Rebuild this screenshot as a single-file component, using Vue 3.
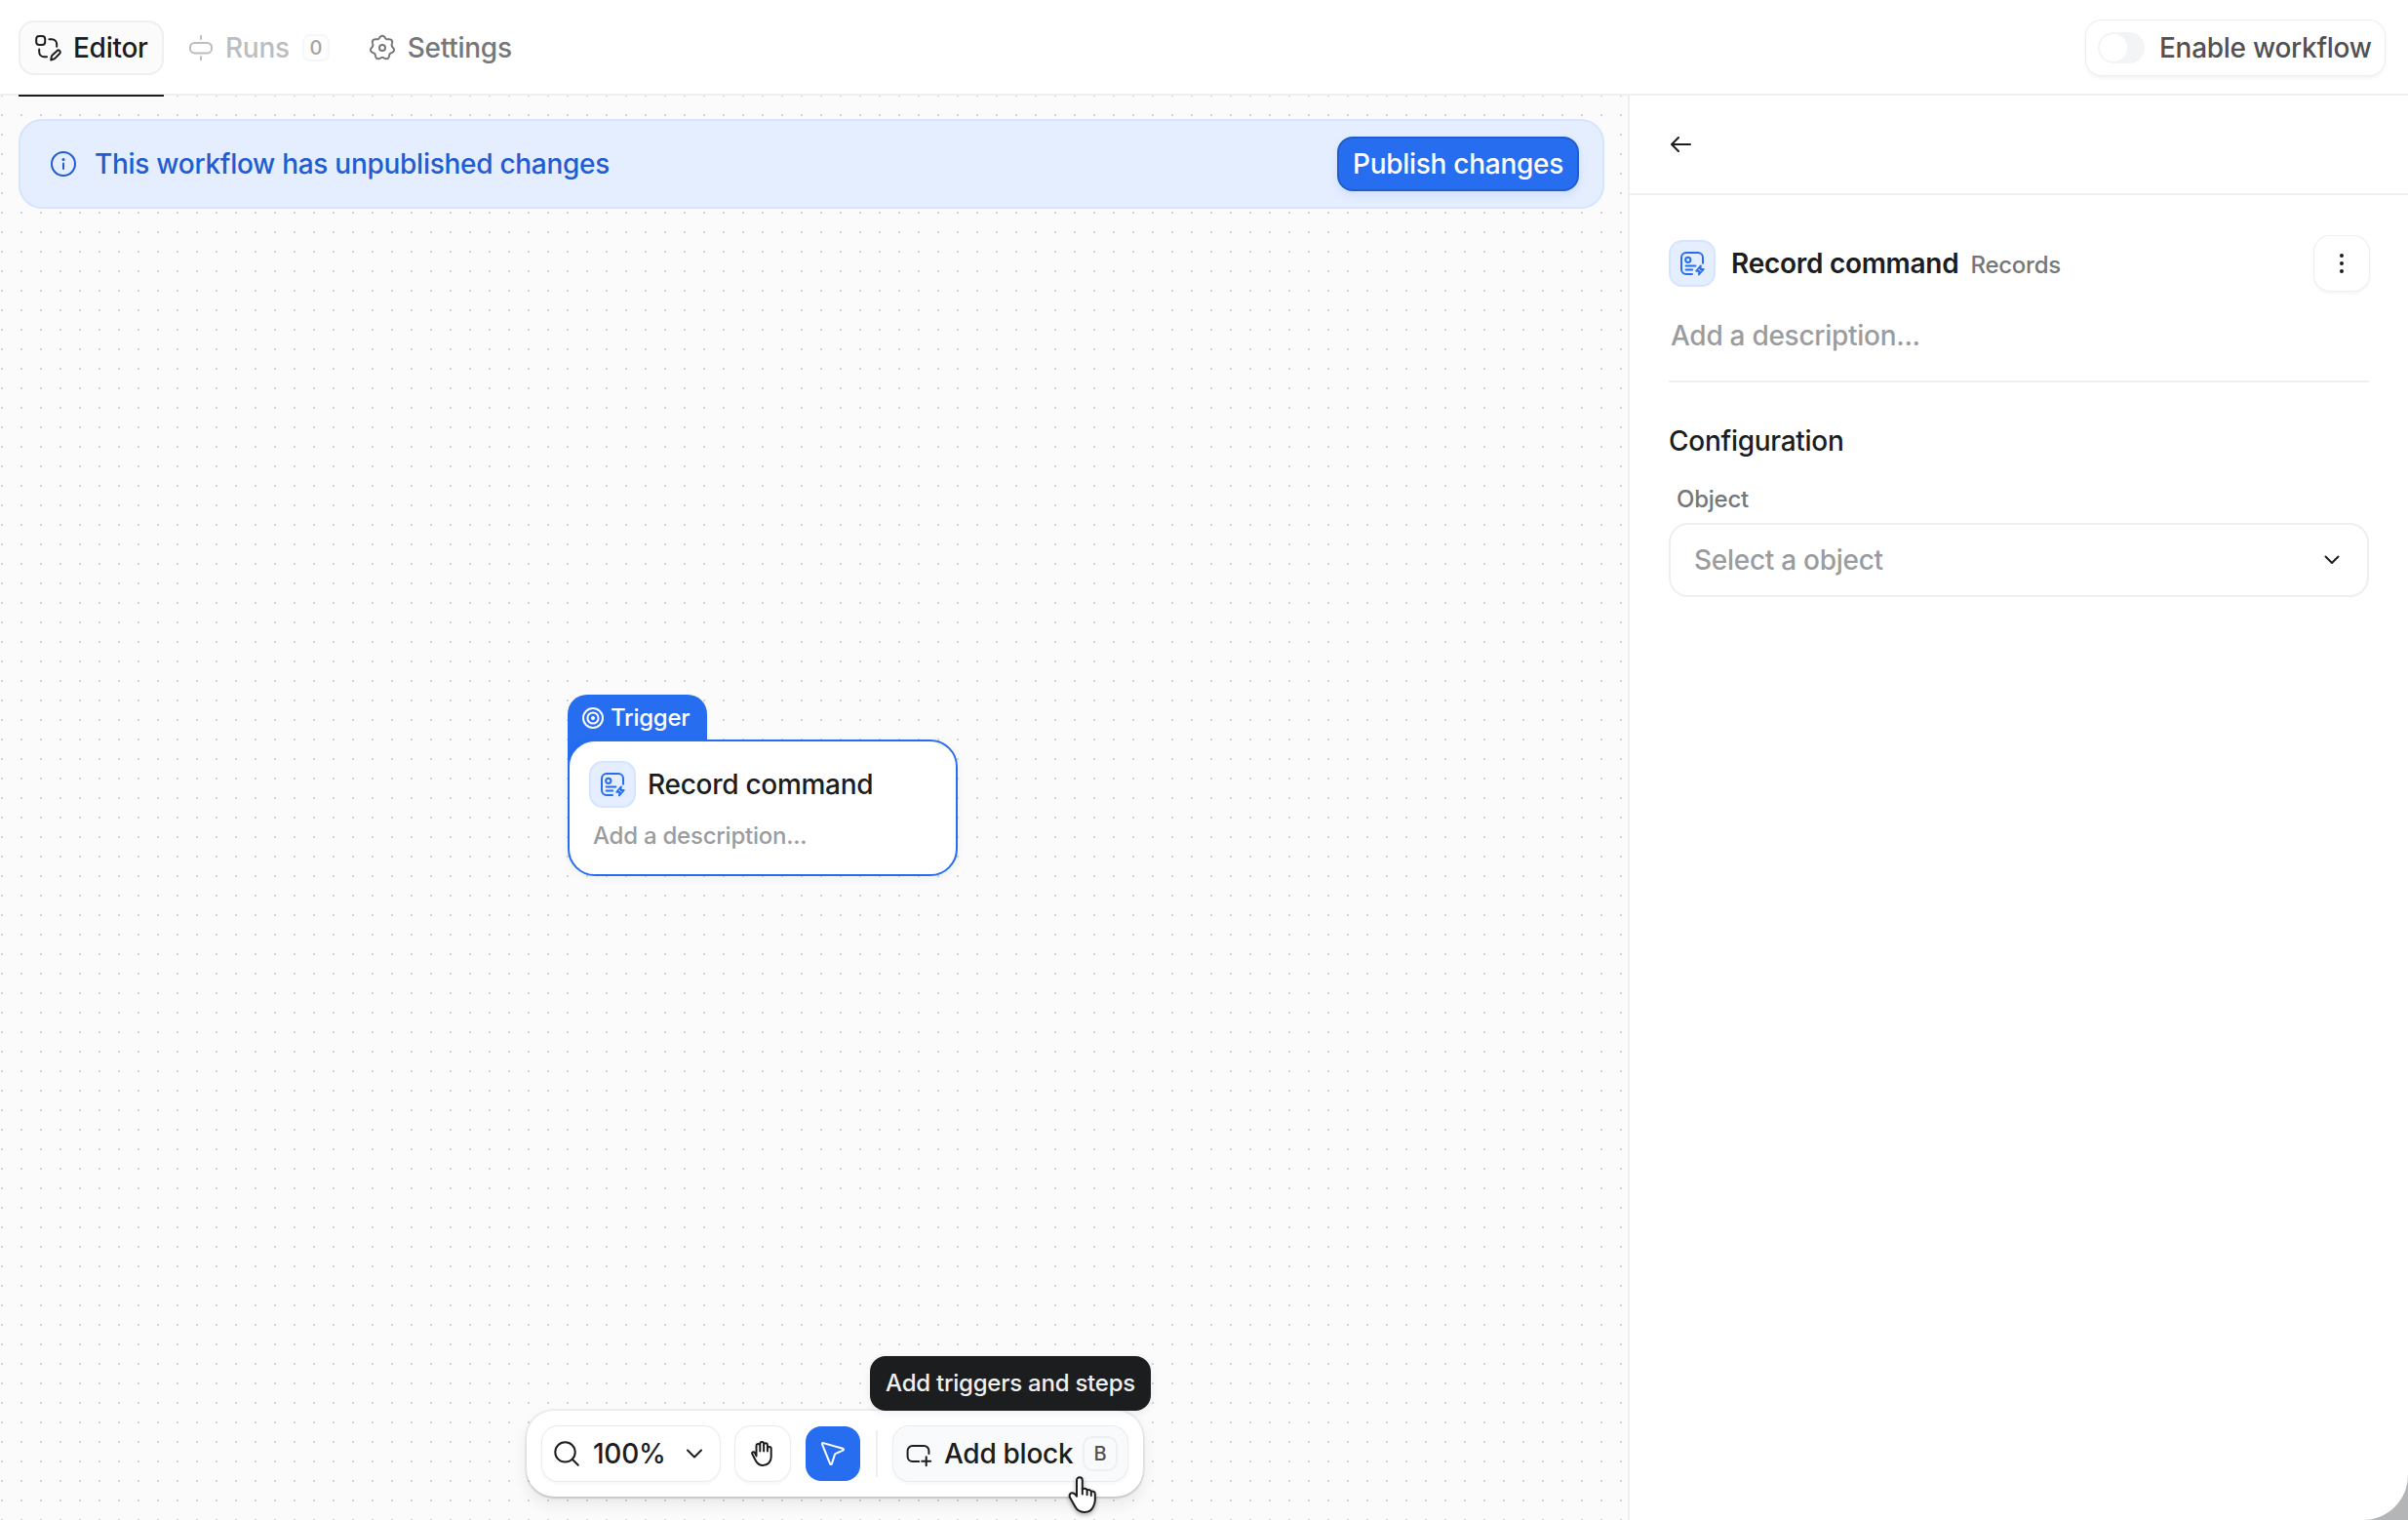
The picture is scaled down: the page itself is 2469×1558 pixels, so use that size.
<script setup>
    import { ref } from 'vue'

    const enabled = ref(false)
    const tool = ref('select')

    // seven-lobed outline of the settings cog
    const cogPath = (() => {
        const points = []
        for (let i = 0; i < 140; i++) {
            const a = (i / 140) * Math.PI * 2
            const r = 11.1 + 1.2 * Math.cos(a * 7)
            points.push(`${(14 + r * Math.sin(a)).toFixed(2)} ${(14 - r * Math.cos(a)).toFixed(2)}`)
        }
        return `M${points.join('L')}Z`
    })()
</script>

<template>
    <div class="app">
        <header class="topbar">
            <nav class="tabs">
                <button class="tab tab-active" type="button">
                    <svg class="icon" viewBox="0 0 28 28">
                        <rect x="1.2" y="2" width="9" height="9" rx="3" />
                        <path d="M14.4 5.2h2.8a5 5 0 0 1 5 5v2.6M4.2 15.6v2.6a5 5 0 0 0 5 5H12" />
                        <path d="M16.2 26.5l.6-3.4a3 3 0 0 1 .9-1.6l4.7-4.3a1.9 1.9 0 0 1 2.9 2.5l-4.7 4.9a3 3 0 0 1-1.5.9z" />
                    </svg>
                    <span>Editor</span>
                </button>
                <button class="tab tab-disabled" type="button">
                    <svg class="icon" viewBox="0 0 28 28">
                        <rect x="3" y="9" width="22" height="10.4" rx="4.5" />
                        <path d="M14 2v3M14 23.2v3" />
                    </svg>
                    <span>Runs</span>
                    <span class="count">0</span>
                </button>
                <button class="tab tab-settings" type="button">
                    <svg class="icon" viewBox="0 0 28 28">
                        <path :d="cogPath" />
                        <circle cx="14" cy="14" r="3" />
                    </svg>
                    <span>Settings</span>
                </button>
            </nav>
            <button class="enable" type="button" @click="enabled = !enabled">
                <span class="switch" :class="{ 'switch-on': enabled }"><span class="knob" /></span>
                <span>Enable workflow</span>
            </button>
        </header>

        <main class="body">
            <section class="canvas">
                <div class="banner">
                    <svg class="icon" viewBox="0 0 28 28">
                        <circle cx="14" cy="14" r="12" />
                        <path d="M14 13.6v5.4" />
                        <circle class="fill" cx="14" cy="9.4" r="1.5" />
                    </svg>
                    <span class="banner-text">This workflow has unpublished changes</span>
                    <button class="publish" type="button">Publish changes</button>
                </div>

                <div class="node">
                    <div class="node-tag">
                        <svg class="tag-icon" viewBox="0 0 24 24">
                            <circle cx="12" cy="12" r="10" />
                            <circle cx="12" cy="12" r="5.6" />
                            <circle class="fill" cx="12" cy="12" r="2" />
                        </svg>
                        <span>Trigger</span>
                    </div>
                    <div class="node-card">
                        <div class="node-head">
                            <span class="tile">
                                <svg class="icon" viewBox="0 0 28 28">
                                    <path d="M25 13.8V8a5 5 0 0 0-5-5H8a5 5 0 0 0-5 5v12a5 5 0 0 0 5 5h6" />
                                    <circle cx="9.8" cy="10.3" r="2.6" />
                                    <path d="M7.6 16.4h9.8M7.6 20.5h6.6" />
                                    <path class="thin" d="M22.9 16.3l-4.7 5.5h3.3l-.6 3.7 4.9-5.5h-3.3z" />
                                </svg>
                            </span>
                            <span>Record command</span>
                        </div>
                        <div class="node-desc">Add a description...</div>
                    </div>
                </div>

                <div class="toolbar">
                    <button class="tool zoom" type="button">
                        <svg class="icon" viewBox="0 0 28 28">
                            <circle cx="12.5" cy="12.4" r="10.2" />
                            <path d="M19.8 19.7l6 6" />
                        </svg>
                        <span class="zoom-value">100%</span>
                        <svg class="chevron" viewBox="0 0 20 20"><path d="M3 6.5l7 7 7-7" /></svg>
                    </button>
                    <button class="tool" :class="{ 'tool-active': tool === 'hand' }" type="button" @click="tool = 'hand'">
                        <svg class="icon" viewBox="0 0 28 28">
                            <path d="M7.5 16.6V6a1.9 1.9 0 0 1 3.8 0v5.4M11.3 6V3.9a1.9 1.9 0 0 1 3.8 0v7.5M15.1 5.2a1.9 1.9 0 0 1 3.8 0v6.4M18.9 9a1.9 1.9 0 0 1 3.8 0v8.2c0 5.2-3.4 8.8-8.4 8.8-3.6 0-5.8-1.6-7.4-4.7l-3.5-6.8c-.9-1.9 1.5-3 2.6-1.3l1.5 2.8" />
                        </svg>
                    </button>
                    <button class="tool" :class="{ 'tool-active': tool === 'select' }" type="button" @click="tool = 'select'">
                        <svg class="icon" viewBox="0 0 28 28">
                            <path d="M4.2 3.1l20 5.7c1 .3 1 1.5.1 1.9l-7.3 3.1a2 2 0 0 0-1 1l-3.1 9.6c-.3.9-1.5.9-1.8 0L3 4.3c-.3-.8.4-1.4 1.2-1.2z" />
                        </svg>
                    </button>
                    <span class="divider" />
                    <button class="tool add" type="button">
                        <svg class="icon" viewBox="0 0 28 28">
                            <path d="M24.4 14v-3a5 5 0 0 0-5-5H7.6a5 5 0 0 0-5 5v6a5 5 0 0 0 5 5h6.6" />
                            <path d="M21.7 17.3v9M17.2 21.8h9" />
                        </svg>
                        <span>Add block</span>
                        <kbd class="key">B</kbd>
                    </button>
                </div>

                <div class="tooltip">Add triggers and steps</div>

                <svg class="pointer" viewBox="0 0 32 42">
                    <path d="M10 20V5.2a2.9 2.9 0 0 1 5.8 0v9.3c1.6-1.4 4.2-1 4.8.9 1.7-1 3.7-.3 4.2 1.4 1.8-.7 4 .3 4 2.6v6.3c0 3-.8 4.6-2 7-1.5 3.4-4.6 5.3-9 5.3-5.3 0-7.7-2.2-9.9-6.5L3 22.8c-1-2.3.2-4.3 2-4.5 2-.2 3.4.9 5 3.4z" />
                    <path d="M15.8 14v5.5M20.6 15.6v4.6M24.8 17v4" />
                </svg>
            </section>

            <aside class="panel">
                <div class="panel-top">
                    <svg class="icon" viewBox="0 0 28 28"><path d="M24 14H5.3M12 7l-7 7 7 7" /></svg>
                </div>
                <div class="panel-body">
                    <div class="panel-head">
                        <span class="tile">
                            <svg class="icon" viewBox="0 0 28 28">
                                <path d="M25 13.8V8a5 5 0 0 0-5-5H8a5 5 0 0 0-5 5v12a5 5 0 0 0 5 5h6" />
                                <circle cx="9.8" cy="10.3" r="2.6" />
                                <path d="M7.6 16.4h9.8M7.6 20.5h6.6" />
                                <path class="thin" d="M22.9 16.3l-4.7 5.5h3.3l-.6 3.7 4.9-5.5h-3.3z" />
                            </svg>
                        </span>
                        <span class="panel-title">Record command</span>
                        <span class="panel-kind">Records</span>
                        <button class="more" type="button">
                            <svg class="icon" viewBox="0 0 28 28">
                                <circle class="fill" cx="14" cy="6" r="2" />
                                <circle class="fill" cx="14" cy="14" r="2" />
                                <circle class="fill" cx="14" cy="22" r="2" />
                            </svg>
                        </button>
                    </div>
                    <div class="panel-desc">Add a description...</div>
                    <h2 class="section-title">Configuration</h2>
                    <label class="field-label">Object</label>
                    <div class="select">
                        <span>Select a object</span>
                        <svg class="chevron" viewBox="0 0 20 20"><path d="M3.5 6.5L10 13l6.5-6.5" /></svg>
                    </div>
                </div>
            </aside>
        </main>
    </div>
</template>

<style>
    body {
        margin: 0;
        background: #b4b5b7;
    }
</style>

<style scoped>
    .app {
        width: 2469px;
        height: 1558px;
        display: flex;
        flex-direction: column;
        overflow: hidden;
        border-bottom-right-radius: 46px;
        background: #fff;
        color: #1c1d1f;
        font-family: Inter, "Liberation Sans", sans-serif;
        font-size: 28px;
        font-weight: 500;
        line-height: 40px;
    }

    .app *,
    .app {
        box-sizing: border-box;
        letter-spacing: -0.01em;
    }

    button {
        margin: 0;
        padding: 0;
        border: none;
        background: none;
        color: inherit;
        font: inherit;
        white-space: nowrap;
        cursor: pointer;
    }

    .icon {
        width: 28px;
        height: 28px;
        flex: none;
    }

    svg {
        fill: none;
        stroke: currentColor;
        stroke-width: 2;
        stroke-linecap: round;
        stroke-linejoin: round;
    }

    .fill {
        fill: currentColor;
        stroke: none;
    }

    .thin {
        stroke-width: 1.8;
    }

    .topbar {
        position: relative;
        z-index: 1;
        height: 98px;
        flex: none;
        display: flex;
        justify-content: space-between;
        padding: 0 24px 0 19px;
        border-bottom: 2px solid #eeeff1;
    }

    .tabs {
        display: flex;
        align-items: center;
        padding-top: 2px;
    }

    .tab {
        position: relative;
        height: 56px;
        display: flex;
        align-items: center;
        gap: 11px;
    }

    .tab-active {
        width: 149px;
        padding-left: 17px;
        border-radius: 16px;
        background: #fbfbfb;
        box-shadow: inset 0 0 0 2px #eeeff1;
    }

    .tab-active::after {
        content: '';
        position: absolute;
        left: 0;
        right: 0;
        bottom: -22px;
        height: 2px;
        background: #1c1d1f;
    }

    .tab-disabled {
        margin-left: 24px;
        color: #bcbdbf;
    }

    .count {
        width: 28px;
        height: 28px;
        margin-left: 2px;
        border: 2px solid #f6f7f8;
        border-radius: 8px;
        background: #fdfdfd;
        color: #a2a3a5;
        font-size: 20px;
        line-height: 24px;
        text-align: center;
    }

    .tab-settings {
        margin-left: 40px;
        gap: 12px;
        color: #75777a;
    }

    .enable {
        width: 306px;
        height: 56px;
        margin-top: 21px;
        padding-left: 12px;
        display: flex;
        align-items: center;
        gap: 15px;
        border-radius: 16px;
        background: #fff;
        color: #505154;
        box-shadow: 0 0 0 1px #eeeff1, 0 2px 5px rgba(28, 40, 64, 0.08);
    }

    .switch {
        width: 48px;
        height: 32px;
        padding: 2px;
        display: flex;
        border-radius: 16px;
        background: #f3f4f6;
    }

    .switch-on {
        justify-content: flex-end;
        background: #266df0;
    }

    .knob {
        width: 28px;
        height: 28px;
        border-radius: 50%;
        background: #fff;
    }

    .body {
        flex: 1;
        min-height: 0;
        display: flex;
    }

    .canvas {
        position: relative;
        width: 1671px;
        flex: none;
        padding: 24px 24px 0 19px;
        border-right: 2px solid #eeeff1;
        background-color: #fbfbfb;
        background-image: conic-gradient(from 270deg at 2px 2px, #d3d4d6 90deg, transparent 90deg);
        background-size: 20px 20px;
        background-position: 1px -1px;
    }

    .banner {
        height: 92px;
        display: flex;
        align-items: center;
        padding: 0 24px 0 30px;
        border: 2px solid #d6e5ff;
        border-radius: 24px;
        background: #e5eeff;
        color: #215cd0;
    }

    .banner-text {
        flex: 1;
        margin-left: 18px;
    }

    .publish {
        width: 248px;
        height: 56px;
        border: 2px solid #215dcf;
        border-radius: 16px;
        background: #266df0;
        color: #fff;
        box-shadow: 0 4px 8px rgba(38, 109, 240, 0.12);
    }

    .node {
        position: absolute;
        left: 582px;
        top: 614px;
        width: 400px;
    }

    .node-tag {
        width: 143px;
        height: 76px;
        margin-bottom: -30px;
        padding: 1px 0 30px 14px;
        display: flex;
        align-items: center;
        gap: 6px;
        border-radius: 20px 20px 0 0;
        background: #266df0;
        color: #fff;
        font-size: 24px;
    }

    .tag-icon {
        width: 24px;
        height: 24px;
        flex: none;
    }

    .node-card {
        position: relative;
        height: 140px;
        padding: 20px;
        border: 2px solid #266df0;
        border-radius: 28px;
        background: #fff;
        box-shadow: 0 2px 8px rgba(28, 40, 64, 0.06);
    }

    .node-head {
        display: flex;
        align-items: center;
        gap: 12px;
    }

    .tile {
        width: 48px;
        height: 48px;
        flex: none;
        display: flex;
        align-items: center;
        justify-content: center;
        border: 2px solid #d6e5ff;
        border-radius: 14px;
        background: #e5eeff;
        color: #266df0;
    }

    .node-desc {
        margin-top: 13px;
        padding-left: 4px;
        color: #9b9c9e;
        font-size: 24px;
        line-height: 32px;
    }

    .toolbar {
        position: absolute;
        left: 540px;
        top: 1348px;
        height: 88px;
        padding: 16px;
        display: flex;
        align-items: center;
        gap: 16px;
        border-radius: 28px;
        background: #fff;
        box-shadow: 0 0 0 2px rgba(28, 40, 64, 0.06), 0 2px 2px rgba(28, 29, 31, 0.12), 0 8px 16px rgba(28, 40, 64, 0.09);
    }

    .tool {
        width: 56px;
        height: 56px;
        display: flex;
        align-items: center;
        justify-content: center;
        border-radius: 16px;
        background: #fff;
        box-shadow: 0 0 0 1px #eaebed, 0 2px 4px rgba(28, 40, 64, 0.05);
    }

    .tool-active {
        background: #266df0;
        color: #fff;
        box-shadow: none;
    }

    .zoom {
        width: 182px;
        padding-left: 11px;
        justify-content: flex-start;
    }

    .zoom-value {
        width: 82px;
        margin: 0 12px 0 13px;
        text-align: left;
    }

    .chevron {
        width: 20px;
        height: 20px;
        flex: none;
    }

    .divider {
        width: 2px;
        height: 48px;
        background: #eeeff1;
    }

    .add {
        width: 240px;
        padding: 0 10px 0 12px;
        justify-content: flex-start;
        gap: 9px;
        background: #f9fafb;
    }

    .add .icon {
        margin-right: 3px;
    }

    .key {
        width: 36px;
        height: 36px;
        flex: none;
        margin-left: auto;
        border: 2px solid #eeeff1;
        border-radius: 10px;
        color: #505154;
        font-family: inherit;
        font-size: 20px;
        line-height: 32px;
        text-align: center;
    }

    .tooltip {
        position: absolute;
        left: 892px;
        top: 1292px;
        width: 288px;
        height: 56px;
        border-radius: 16px;
        background: #1c1d1f;
        color: #eeeff1;
        font-size: 24px;
        line-height: 56px;
        text-align: center;
        box-shadow: 0 2px 8px rgba(28, 40, 64, 0.08);
    }

    .pointer {
        position: absolute;
        left: 1094px;
        top: 1414px;
        width: 32px;
        height: 42px;
        color: #1c1d1f;
        fill: #fff;
        filter: drop-shadow(0 2px 2px rgba(0, 0, 0, 0.3));
    }

    .panel {
        flex: 1;
        min-width: 0;
    }

    .panel-top {
        height: 102px;
        display: flex;
        align-items: center;
        padding-left: 38px;
        border-bottom: 2px solid #eeeff1;
    }

    .panel-body {
        padding: 42px 40px 0;
    }

    .panel-head {
        height: 56px;
        display: flex;
        align-items: center;
    }

    .panel-title {
        margin-left: 16px;
        font-weight: 600;
    }

    .panel-kind {
        margin: 3px 0 0 12px;
        color: #75777a;
        font-size: 24px;
    }

    .more {
        width: 56px;
        height: 56px;
        margin-left: auto;
        display: flex;
        align-items: center;
        justify-content: center;
        border-radius: 16px;
        box-shadow: 0 0 0 1px #eeeff1, 0 2px 4px rgba(28, 40, 64, 0.06);
    }

    .panel-desc {
        margin-top: 26px;
        padding: 0 0 26px 2px;
        border-bottom: 2px solid #eeeff1;
        color: #9b9c9e;
    }

    .section-title {
        margin: 40px 0 0;
        font-size: 28px;
        font-weight: 500;
    }

    .field-label {
        display: block;
        margin: 24px 0 8px;
        padding-left: 8px;
        color: #75777a;
        font-size: 24px;
        line-height: 32px;
    }

    .select {
        height: 76px;
        display: flex;
        align-items: center;
        justify-content: space-between;
        padding: 0 26px 0 24px;
        border: 2px solid #eeeff1;
        border-radius: 20px;
        color: #9b9c9e;
    }

    .select .chevron {
        color: #1c1d1f;
    }
</style>
